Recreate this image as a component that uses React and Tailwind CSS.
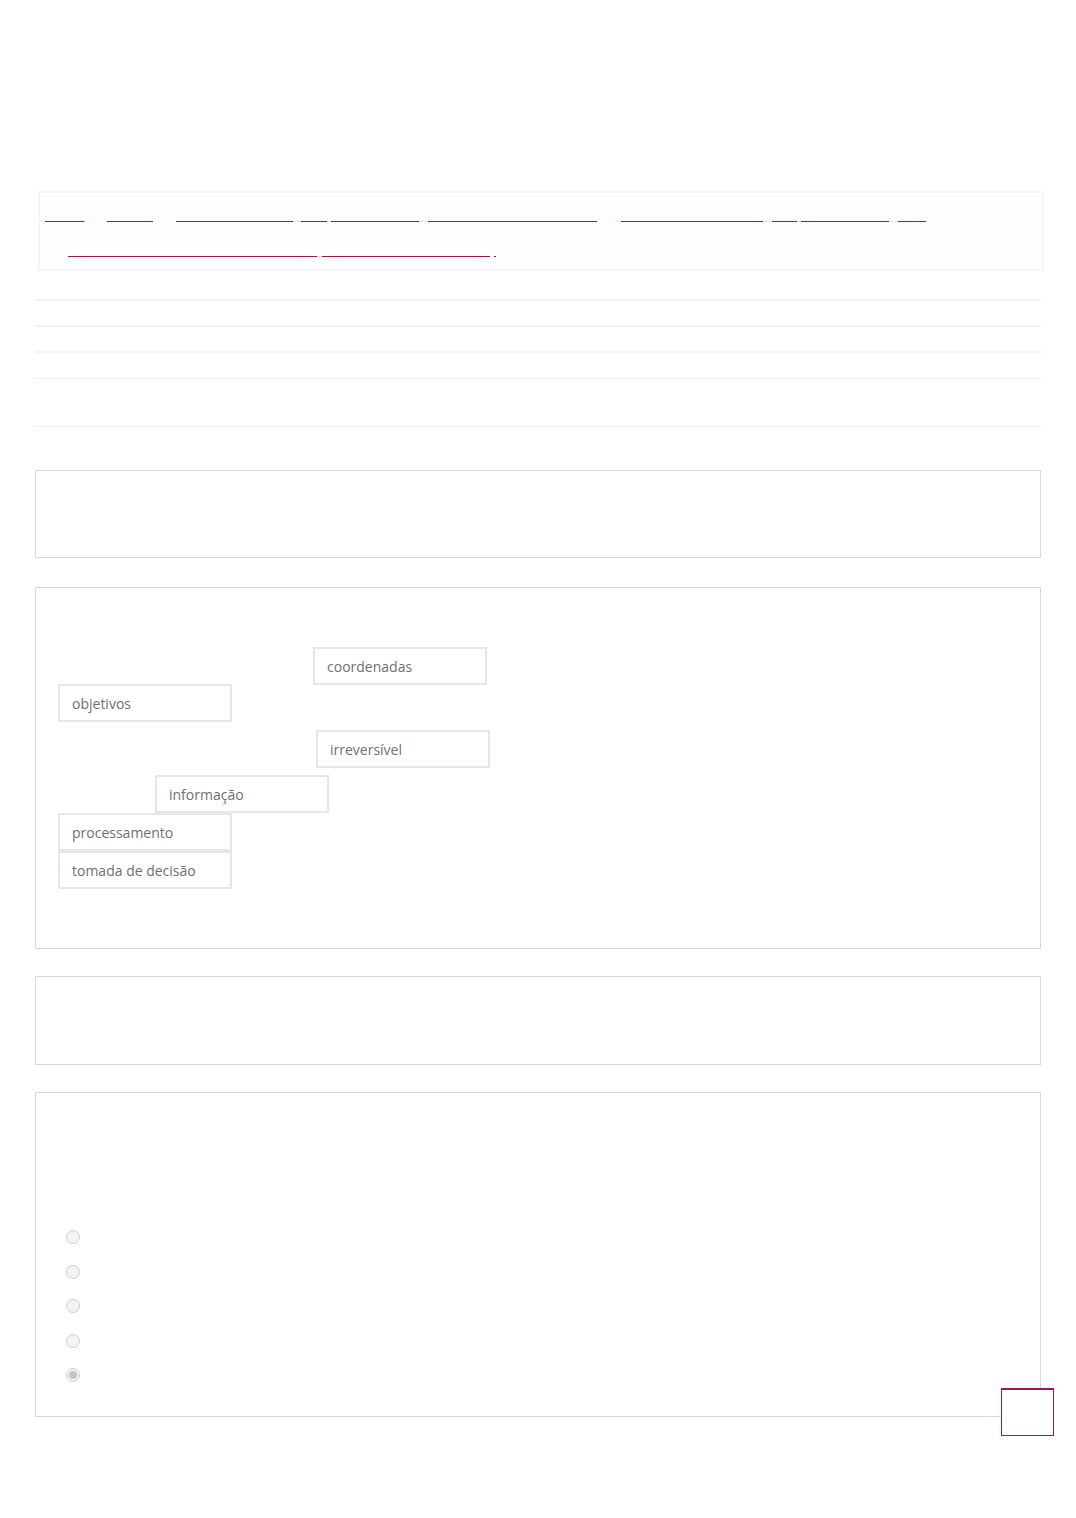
import React from "react";

const line1 = [
  [45, 84, "d"],
  [107, 153, "d"],
  [176, 293, "d"],
  [293, 301, "l"],
  [301, 327, "d"],
  [327, 331, "l"],
  [331, 419, "d"],
  [419, 428, "l"],
  [428, 597, "d"],
  [621, 763, "d"],
  [763, 772, "l"],
  [772, 797, "d"],
  [797, 801, "l"],
  [801, 889, "d"],
  [889, 898, "l"],
  [898, 926, "d"],
];

const line2 = [
  [68, 317, "d"],
  [317, 322, "l"],
  [322, 490, "d"],
  [494, 496, "d"],
];

function Underlines({ segs, origin }) {
  let cursor = origin;
  return (
    <div className="flex h-px">
      {segs.map(([s, e, t], i) => {
        const ml = s - cursor;
        cursor = e;
        return (
          <span
            key={i}
            className={t === "d" ? "block h-px bg-[#a3154f]" : "block h-px bg-[#f1e1e8]"}
            style={{ marginLeft: ml, width: e - s }}
          />
        );
      })}
    </div>
  );
}

const blanks = [
  { word: "coordenadas", mt: "mt-[59px]", ml: "ml-[277px]" },
  { word: "objetivos", mt: "mt-[-1px]", ml: "ml-[22px]" },
  { word: "irreversível", mt: "mt-[8px]", ml: "ml-[280px]" },
  { word: "informação", mt: "mt-[7px]", ml: "ml-[119px]" },
  { word: "processamento", mt: "mt-0", ml: "ml-[22px]" },
  { word: "tomada de decisão", mt: "mt-0", ml: "ml-[22px]" },
];

function Radio({ checked }) {
  return (
    <div className="flex h-[34.5px] items-center pl-[30px]">
      {checked ? (
        <span className="flex h-[14px] w-[14px] items-center justify-center rounded-full border border-[#d0d0d0] bg-[#f4f4f4]">
          <span className="block h-[8px] w-[8px] rounded-full bg-[#c6c6c6]" />
        </span>
      ) : (
        <span className="block h-[14px] w-[14px] rounded-full border border-[#cfcfcf] bg-[#f3f3f3]" />
      )}
    </div>
  );
}

export default function App() {
  return (
    <div
      className="relative min-h-[1518px] w-full bg-white"
      style={{ fontFamily: '"Open Sans", "Noto Sans", sans-serif' }}
    >
      <div className="px-[35px] pt-[191px] pb-[102px]">
        {/* top box with link underlines */}
        <div className="ml-[3px] h-[80px] w-[1006px] border-2 border-[#f4f4fa] bg-[#fefeff]">
          <div className="mt-[28px]">
            <Underlines segs={line1} origin={40} />
          </div>
          <div className="mt-[34px]">
            <Underlines segs={line2} origin={40} />
          </div>
        </div>

        {/* separator lines */}
        <div className="mt-[28px] h-[2px] w-[1006px] bg-[#f2f2f2]" />
        <div className="mt-[24px] h-[2px] w-[1006px] bg-[#f2f2f2]" />
        <div className="mt-[24px] h-[2px] w-[1006px] bg-[#f2f2f2]" />
        <div className="mt-[25px] h-px w-[1006px] bg-[#f0f0f0]" />
        <div className="mt-[47px] h-px w-[1006px] bg-[#f0f0f0]" />

        {/* card 1 */}
        <div className="mt-[43px] h-[88px] w-[1006px] border border-[#d9d9d9]" />

        {/* card 2 with blanks */}
        <div className="mt-[29px] flex h-[362px] w-[1006px] flex-col items-start border border-[#d9d9d9]">
          {blanks.map((b) => (
            <div
              key={b.word}
              className={`${b.mt} ${b.ml} flex h-[38px] w-[174px] items-center border-2 border-[#e6e6e8] bg-white pl-3 text-[14px] text-[#6f6f6f]`}
            >
              {b.word}
            </div>
          ))}
        </div>

        {/* card 3 */}
        <div className="mt-[27px] h-[89px] w-[1006px] border border-[#d9d9d9]" />

        {/* card 4 with radios */}
        <div className="mt-[27px] h-[325px] w-[1006px] border border-[#d9d9d9]">
          <div className="mt-[127px] flex flex-col">
            <Radio />
            <Radio />
            <Radio />
            <Radio />
            <Radio checked />
          </div>
        </div>
      </div>

      {/* floating button */}
      <button
        type="button"
        aria-label="Voltar ao topo"
        className="absolute left-[1001px] top-[1388px] h-[48px] w-[53px] border border-t-2 border-[#a3154f] bg-white"
      />
    </div>
  );
}
